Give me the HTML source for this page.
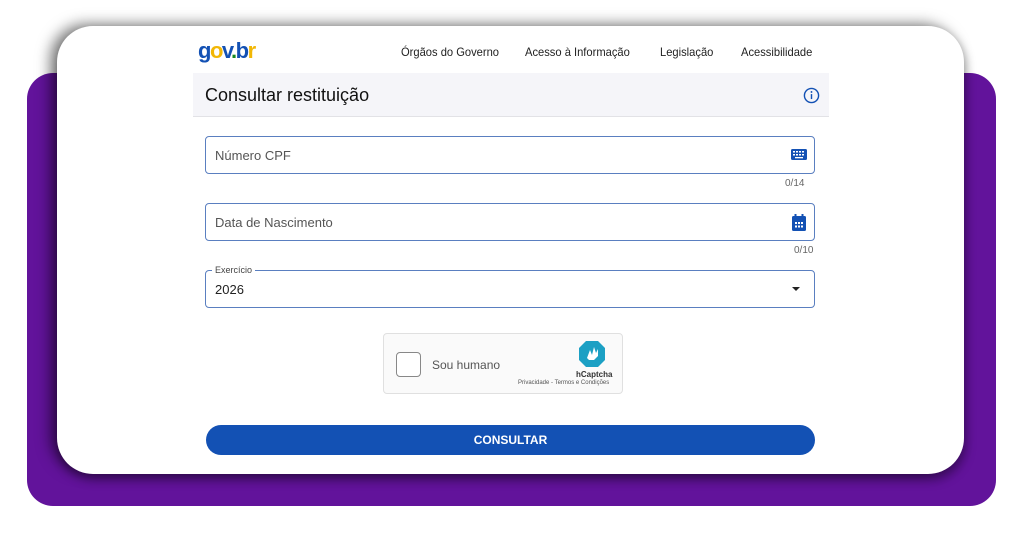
<!DOCTYPE html>
<html><head><meta charset="utf-8"><style>
*{margin:0;padding:0;box-sizing:border-box}
body{width:1024px;height:536px;background:#fff;position:relative;overflow:hidden;font-family:"Liberation Sans",sans-serif}
.purple{position:absolute;left:27px;top:73px;width:969px;height:433px;background:#62139b;border-radius:26px}
.card{position:absolute;left:57px;top:26px;width:907px;height:448px;background:#fff;border-radius:36px;box-shadow:-7px -2px 14px rgba(0,0,0,.5),2px 6px 10px rgba(0,0,0,.35)}
.abs{position:absolute}
.nav{top:45px;font-size:12px;color:#222;transform-origin:left top;transform:scaleX(.93);white-space:nowrap}
.field{position:absolute;left:205px;width:610px;height:38px;border:1px solid #5a7fc0;border-radius:4px}
.field .ph{position:absolute;left:9px;top:11px;font-size:13px;color:#555}
.cnt{position:absolute;font-size:10px;color:#666}
</style></head><body>
<div class="purple"></div>
<div class="card"></div>
<div class="abs" style="left:198px;top:38px;font-size:22px;font-weight:bold;letter-spacing:-1.5px"><span style="color:#1351b4">g</span><span style="color:#f2b705">o</span><span style="color:#1351b4">v</span><span style="color:#168821">.</span><span style="color:#1351b4">b</span><span style="color:#f2b705">r</span></div>
<div class="abs nav" style="left:401px">Órgãos do Governo</div>
<div class="abs nav" style="left:525px">Acesso à Informação</div>
<div class="abs nav" style="left:660px">Legislação</div>
<div class="abs nav" style="left:741px">Acessibilidade</div>
<div class="abs" style="left:193px;top:73px;width:636px;height:44px;background:#f5f5f9;border-bottom:1px solid #e2e2e6"></div>
<div class="abs" style="left:205px;top:85px;font-size:18px;color:#111">Consultar restituição</div>
<svg class="abs" style="left:803px;top:87px" width="17" height="17" viewBox="0 0 24 24"><circle cx="12" cy="12" r="10" fill="none" stroke="#1351b4" stroke-width="2"/><rect x="11" y="10" width="2" height="7" fill="#1351b4"/><circle cx="12" cy="7" r="1.3" fill="#1351b4"/></svg>
<div class="field" style="top:136px"><div class="ph">Número CPF</div>
<svg class="abs" style="left:585px;top:12px" width="16" height="13" viewBox="0 0 16 13"><rect width="16" height="11" rx="1.5" fill="#1351b4"/><g fill="#fff"><rect x="2" y="2" width="2" height="1.5"/><rect x="5" y="2" width="2" height="1.5"/><rect x="8" y="2" width="2" height="1.5"/><rect x="11" y="2" width="2" height="1.5"/><rect x="2" y="5" width="2" height="1.5"/><rect x="5" y="5" width="2" height="1.5"/><rect x="8" y="5" width="2" height="1.5"/><rect x="11" y="5" width="2" height="1.5"/><rect x="4" y="8" width="8" height="1.3"/></g></svg></div>
<div class="cnt" style="left:785px;top:178px">0/14</div>
<div class="field" style="top:203px"><div class="ph">Data de Nascimento</div>
<svg class="abs" style="left:586px;top:10px" width="14" height="17" viewBox="0 0 14 17"><rect x="0" y="2" width="14" height="15" rx="1.5" fill="#1351b4"/><rect x="2.5" y="0" width="2" height="4" fill="#1351b4"/><rect x="9.5" y="0" width="2" height="4" fill="#1351b4"/><g fill="#fff"><rect x="3" y="8" width="2" height="2"/><rect x="6" y="8" width="2" height="2"/><rect x="9" y="8" width="2" height="2"/><rect x="3" y="11.5" width="2" height="2"/><rect x="6" y="11.5" width="2" height="2"/><rect x="9" y="11.5" width="2" height="2"/></g></svg></div>
<div class="cnt" style="left:794px;top:245px">0/10</div>
<div class="field" style="top:270px"><div class="abs" style="left:6px;top:-6px;background:#fff;padding:0 3px;font-size:9px;color:#444">Exercício</div><div class="abs" style="left:9px;top:11px;font-size:13px;color:#222">2026</div>
<div class="abs" style="left:586px;top:16px;width:0;height:0;border-left:4px solid transparent;border-right:4px solid transparent;border-top:4px solid #222"></div></div>
<div class="abs" style="left:383px;top:333px;width:240px;height:61px;background:#fafafa;border:1px solid #e0e0e0;border-radius:4px">
<div class="abs" style="left:12px;top:18px;width:25px;height:25px;border:1px solid #888;border-radius:4px;background:#fff"></div>
<div class="abs" style="left:48px;top:24px;font-size:12px;color:#555">Sou humano</div>
<svg class="abs" style="left:194px;top:6px" width="28" height="28" viewBox="0 0 28 28"><path d="M8 1h12l7 7v12l-7 7H8l-7-7V8z" fill="#1ca0c4"/><path d="M9 18l3-8 2 5 2-8 2 6 2-4 0 7-4 4h-5z" fill="#fff"/></svg>
<div class="abs" style="left:192px;top:36px;font-size:8px;font-weight:bold;color:#333">hCaptcha</div>
<div class="abs" style="left:134px;top:46px;font-size:6px;color:#555">Privacidade - Termos e Condições</div></div>
<div class="abs" style="left:206px;top:425px;width:609px;height:30px;background:#1351b4;border-radius:15px;color:#fff;font-size:12px;font-weight:bold;text-align:center;line-height:30px">CONSULTAR</div>
</body></html>
